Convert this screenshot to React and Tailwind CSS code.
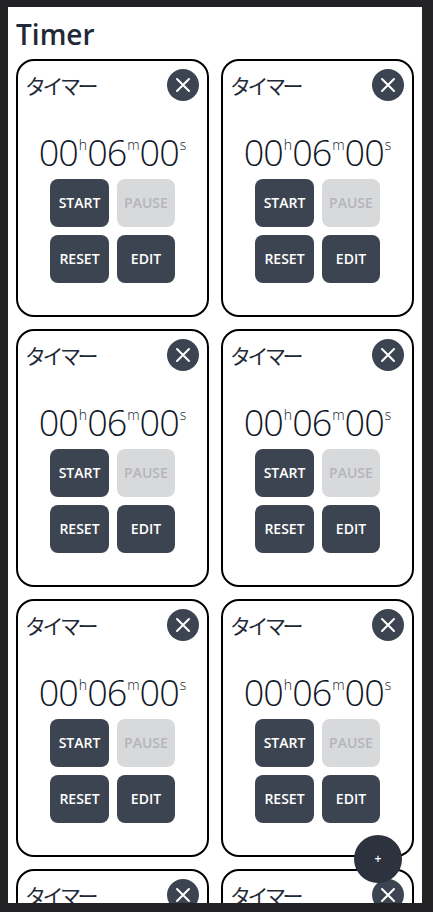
const font = { fontFamily: '"Open Sans", "Noto Sans CJK JP", sans-serif' }

function TimerCard() {
  return (
    <div className="flex h-[258px] flex-col rounded-[18px] border-2 border-black bg-white">
      <div className="flex items-center justify-between px-[8px] pt-[8px]">
        <span className="-ml-[1px] pt-[2px] text-[21px] leading-[30px] tracking-[-3.5px] text-[#1f2937]">タイマー</span>
        <button className="flex h-8 w-8 items-center justify-center rounded-full bg-[#3d4451]">
          <svg width="16" height="16" viewBox="0 0 16 16" fill="none" stroke="white" strokeWidth="2" strokeLinecap="round">
            <path d="M2 2 L14 14 M14 2 L2 14" />
          </svg>
        </button>
      </div>
      <div className="mt-[32px] flex items-start justify-center text-[#111827]">
        <span className="text-[36px] leading-[40px] font-[350] tracking-[-1px]">00</span>
        <span className="ml-[1px] mt-[2px] text-[14px] leading-[20px] font-light">h</span>
        <span className="text-[36px] leading-[40px] font-[350] tracking-[-1px]">06</span>
        <span className="ml-[1px] mt-[2px] text-[14px] leading-[20px] font-light">m</span>
        <span className="text-[36px] leading-[40px] font-[350] tracking-[-1px]">00</span>
        <span className="ml-[1px] mt-[2px] text-[14px] leading-[20px] font-light">s</span>
      </div>
      <div className="mt-[6px] grid grid-cols-[59px_58px] justify-center gap-x-[8px] gap-y-[8px]">
        <button className="h-12 rounded-lg bg-[#3d4451] pb-[2px] text-[14px] font-semibold text-white">START</button>
        <button className="h-12 rounded-lg bg-[#d8d9db] pb-[2px] text-[14px] font-semibold text-[#b3b5ba]">PAUSE</button>
        <button className="h-12 rounded-lg bg-[#3d4451] pb-[2px] text-[14px] font-semibold text-white">RESET</button>
        <button className="h-12 rounded-lg bg-[#3d4451] pb-[2px] text-[14px] font-semibold text-white">EDIT</button>
      </div>
    </div>
  )
}

export default function App() {
  const cards = [0, 1, 2, 3, 4, 5, 6, 7]
  return (
    <div className="relative h-[912px] w-[433px] overflow-hidden bg-[#232326] pb-[9px] pl-[8px] pr-[11px] pt-[7px]" style={font}>
      <div className="h-full overflow-hidden bg-white px-[8px]">
        <h1 className="pt-[9px] text-[28px] leading-[36px] font-semibold text-[#1f2937]">Timer</h1>
        <div className="mt-[7px] grid grid-cols-2 gap-x-[12px] gap-y-[12px]">
          {cards.map((c) => (
            <TimerCard key={c} />
          ))}
        </div>
      </div>
      <button className="absolute left-[354px] top-[835px] flex h-12 w-12 items-center justify-center rounded-full bg-[#2c333f] text-[12px] font-semibold text-white">
        +
      </button>
    </div>
  )
}
